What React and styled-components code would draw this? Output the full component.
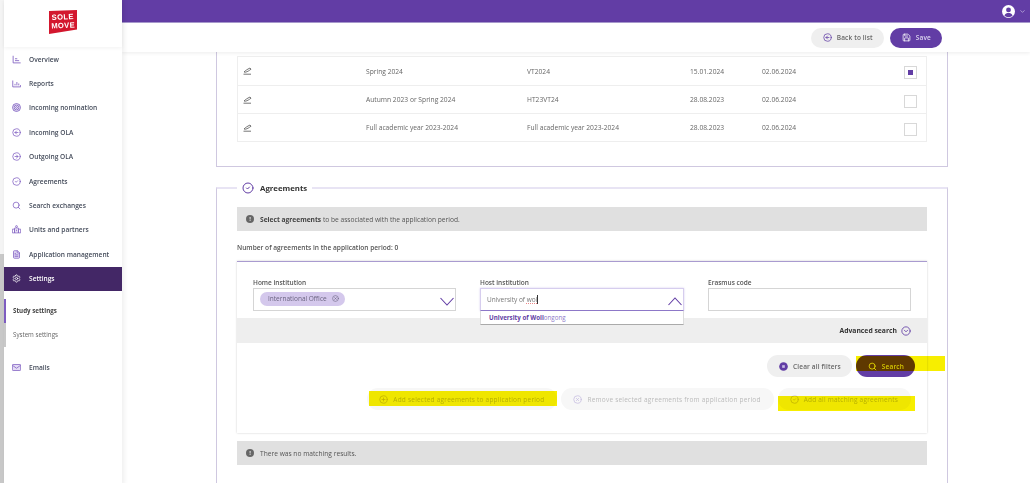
import React from "react";
import styled, { createGlobalStyle } from "styled-components";
import {
  CircleArrowLeft,
  CircleArrowRight,
  CircleCheck,
  CircleChevronDown,
  CirclePlus,
  CircleX,
  ChevronDown,
  FileText,
  Search,
  Settings,
  Save,
} from "lucide-react";

const purple = "#623da5";
const lilac = "#cfc8e0";

const GlobalStyle = createGlobalStyle`
  html, body { margin: 0; padding: 0; height: 100%; background: #fff; overflow: hidden; }
  body { font-family: "Open Sans", "Liberation Sans", sans-serif; color: #555; }
  #root { height: 100%; }
`;

const Page = styled.div`
  display: grid;
  grid-template-columns: 4px 118px 1fr;
  height: 483px;
  overflow: hidden;
`;

const Strip = styled.div`
  background: linear-gradient(#f4f4f4 0, #f4f4f4 254px, #c8c8c8 254px);
`;

const Sidebar = styled.aside`
  display: flex;
  flex-direction: column;
  background: #fff;
  box-shadow: 2px 0 5px rgba(0, 0, 0, 0.07);
  z-index: 3;
`;

const LogoBox = styled.div`
  height: 47px;
  display: flex;
  align-items: flex-start;
  justify-content: center;
  padding-top: 10px;
  box-sizing: border-box;
  box-shadow: 0 1px 4px rgba(0, 0, 0, 0.06);
`;

const Nav = styled.nav`
  display: flex;
  flex-direction: column;
`;

const NavItem = styled.div`
  height: 24.4px;
  display: flex;
  align-items: center;
  gap: 8px;
  padding-left: 8px;
  font-size: 6.6px;
  font-weight: 600;
  color: ${(p) => (p.$active ? "#fff" : "#444b5a")};
  background: ${(p) => (p.$active ? "#432766" : "transparent")};
  svg {
    width: 9px;
    height: 9px;
    flex: none;
    color: ${(p) => (p.$active ? "#fff" : "#7d5cc0")};
  }
`;

const SubNav = styled.div`
  display: flex;
  flex-direction: column;
  margin: 8px 0;
`;

const SubItem = styled.div`
  height: 24px;
  display: flex;
  align-items: center;
  padding-left: 7px;
  font-size: 6.2px;
  font-weight: ${(p) => (p.$active ? 700 : 400)};
  color: ${(p) => (p.$active ? "#444" : "#666")};
  border-left: 2px solid ${(p) => (p.$active ? "#7d5cc0" : "#c8c8c8")};
`;

const Main = styled.main`
  display: flex;
  flex-direction: column;
  min-width: 0;
`;

const TopBar = styled.header`
  height: 22px;
  flex: none;
  background: ${purple};
  border-bottom: 1px solid #a99bd0;
  display: flex;
  align-items: center;
  justify-content: flex-end;
  gap: 4px;
  padding-right: 4px;
  color: #ddd6ef;
`;

const SubBar = styled.div`
  height: 29px;
  flex: none;
  display: flex;
  align-items: center;
  justify-content: flex-end;
  gap: 6px;
  padding-right: 88px;
  background: #fff;
  box-shadow: 0 1px 4px rgba(0, 0, 0, 0.08);
  z-index: 2;
`;

const Pill = styled.button`
  height: ${(p) => (p.$tall ? 22 : 20)}px;
  box-sizing: border-box;
  border: none;
  border-radius: 11px;
  padding: 0 ${(p) => (p.$faded ? 13 : 11)}px 0 12px;
  display: inline-flex;
  align-items: center;
  gap: 5px;
  font: ${(p) => (p.$faded ? 400 : 600)} 6.5px "Open Sans", sans-serif;
  letter-spacing: ${(p) => (p.$faded ? 0.22 : 0.15)}px;
  white-space: nowrap;
  background: ${(p) => (p.$primary ? purple : p.$faded ? "#f7f7f7" : "#efefef")};
  color: ${(p) => (p.$primary ? "#ddd6ef" : p.$faded ? "#bbb" : "#666")};
  svg {
    width: 9px;
    height: 9px;
    flex: none;
    color: ${(p) => (p.$primary ? "#fff" : p.$faded ? "#c6bce0" : purple)};
  }
`;

const Content = styled.div`
  flex: 1;
  min-height: 0;
  padding: 0 82px 0 94px;
  display: flex;
  flex-direction: column;
`;

const Section = styled.section`
  border: 1px solid ${lilac};
  border-top: ${(p) => (p.$open ? "none" : "2px solid #e8e4f4")};
  padding: ${(p) => (p.$open ? "4px 20px 24px" : "0 20px 20px")};
  margin-bottom: ${(p) => (p.$open ? 20 : 0)}px;
  flex: ${(p) => (p.$open ? "none" : 1)};
`;

const Rows = styled.div`
  border: 1px solid #eee;
`;

const Row = styled.div`
  height: 28px;
  box-sizing: border-box;
  display: grid;
  grid-template-columns: 123px 161px 163px 72px 1fr 13px;
  align-items: center;
  padding: 0 9px 0 5px;
  font-size: 6.7px;
  color: #666;
  & + & {
    border-top: 1px solid #eee;
  }
`;

const EditMark = styled.svg`
  width: 9px;
  height: 8px;
  color: #666;
`;

const Check = styled.span`
  width: 13px;
  height: 13px;
  box-sizing: border-box;
  margin-top: 3px;
  border: 1px solid #d8d8d8;
  display: flex;
  align-items: center;
  justify-content: center;
  &::after {
    content: "";
    width: 5px;
    height: 5px;
    background: ${(p) => (p.$on ? purple : "transparent")};
  }
`;

const Legend = styled.div`
  display: flex;
  width: fit-content;
  align-items: center;
  gap: 6px;
  height: 14px;
  margin: -8px 0 12px;
  padding: 0 5px;
  background: #fff;
  font-size: 7.8px;
  font-weight: 700;
  color: #333;
  svg {
    width: 12px;
    height: 12px;
    color: ${purple};
  }
`;

const Notice = styled.div`
  height: 24px;
  display: flex;
  align-items: center;
  gap: 6px;
  padding-left: 9px;
  background: #e0e0e0;
  font-size: 6.65px;
  color: #555;
  b {
    font-weight: 700;
    color: #444;
  }
`;

const Dot = styled.span`
  width: 8px;
  height: 8px;
  border-radius: 50%;
  background: #666;
  color: #e0e0e0;
  font: 700 6px/8px "Open Sans", sans-serif;
  text-align: center;
  flex: none;
`;

const Count = styled.p`
  margin: 12px 0 8px;
  font-size: 6.6px;
  font-weight: 600;
  line-height: 10px;
  color: #555;
`;

const Card = styled.div`
  border-top: 1px solid #a99bd0;
  box-shadow: 0 0 2px rgba(0, 0, 0, 0.2);
  margin-bottom: 8px;
`;

const Filters = styled.div`
  display: grid;
  grid-template-columns: 203px 204px 203px;
  gap: 24px;
  padding: 16px 16px 7px;
`;

const Field = styled.div`
  position: relative;
`;

const Label = styled.div`
  font-size: 6.5px;
  font-weight: 600;
  line-height: 10px;
  color: #555;
`;

const Box = styled.div`
  height: 23px;
  box-sizing: border-box;
  border: 1px solid ${(p) => (p.$open ? "#d6cdee" : "#d5d5d5")};
  border-bottom-color: ${(p) => (p.$open ? "#8d78c8" : "#d5d5d5")};
  box-shadow: ${(p) => (p.$open ? "0 0 2px #d6cdee" : "none")};
  display: flex;
  align-items: center;
  justify-content: space-between;
  padding: 0 1px 0 6px;
  font-size: 6.5px;
  color: #777;
`;

const Arrow = styled.svg`
  width: 14px;
  height: 9px;
  margin-top: 3px;
  flex: none;
  color: ${purple};
`;

const Tag = styled.span`
  height: 14px;
  margin-top: -2px;
  display: inline-flex;
  align-items: center;
  gap: 5px;
  padding: 0 6px 0 8px;
  border-radius: 7px;
  background: #d4c8ec;
  color: #6b6480;
  font-size: 6.5px;
  svg {
    width: 7px;
    height: 7px;
    color: #6b6480;
  }
`;

const Squiggle = styled.span`
  text-decoration: underline dotted #e88 0.6px;
`;

const Caret = styled.span`
  border-left: 1px solid #333;
`;

const Dropdown = styled.div`
  position: absolute;
  left: 0;
  right: 0;
  top: 33px;
  height: 14px;
  box-sizing: border-box;
  background: #fff;
  border: 1px solid #ddd;
  border-top: none;
  border-bottom: 1px solid #aaa;
  padding-left: 8px;
  display: flex;
  align-items: center;
  font-size: 6.2px;
  color: #8d78c8;
  z-index: 1;
  b {
    font-weight: 700;
    color: ${purple};
  }
`;

const Advanced = styled.div`
  height: 25px;
  background: #eee;
  display: flex;
  align-items: center;
  justify-content: flex-end;
  gap: 4px;
  padding-right: 16px;
  font-size: 6.8px;
  font-weight: 700;
  color: #333;
  svg {
    width: 10px;
    height: 10px;
    color: ${purple};
  }
`;

const Actions = styled.div`
  display: flex;
  flex-direction: column;
  gap: 11px;
  padding: 12px 0 23px;
`;

const ActionRow = styled.div`
  display: flex;
  justify-content: flex-end;
  gap: 4px;
  padding-right: ${(p) => p.$inset}px;
`;

const Marked = styled.span`
  position: relative;
  display: inline-flex;
`;

/* yellow marker drawn over the screenshot */
const Highlight = styled.span`
  position: absolute;
  left: ${(p) => p.$left}px;
  right: ${(p) => p.$right}px;
  top: ${(p) => p.$top}px;
  height: 15px;
  background: #f7ee00;
  mix-blend-mode: multiply;
`;

const LogoMark = () => (
  <svg width="28" height="24" viewBox="0 0 28 24">
    <polygon points="0,1 28,0 28,19.5 0,24" fill="#d3172e" />
    <g transform="rotate(-3 14 12)" fontFamily="Liberation Sans" fontWeight="700" fontSize="7.6" letterSpacing="0.35" fill="#fff" textAnchor="middle">
      <text x="14" y="9.5">SOLE</text>
      <text x="14" y="18">MOVE</text>
    </g>
  </svg>
);

const Pen = () => (
  <EditMark viewBox="0 0 9 8" fill="none" stroke="currentColor" strokeWidth="0.9">
    <path d="M1 5 C2.5 3.5 4 2.5 7 1 L8 2.2 C6 3.8 4.5 4.6 2.5 5.2 Z" />
    <path d="M0.5 7.2 H8" />
  </EditMark>
);

const OverviewIcon = () => (
  <svg viewBox="0 0 24 24" fill="none" stroke="currentColor" strokeWidth="2.2">
    <path d="M3 2V21H23M8 10H14M8 15H19" />
  </svg>
);

const ReportsIcon = () => (
  <svg viewBox="0 0 24 24" fill="none" stroke="currentColor" strokeWidth="2.2">
    <path d="M2 4V21H23V16M8 17V13M13 17V8M18 17V12" />
  </svg>
);

const TargetIcon = () => (
  <svg viewBox="0 0 24 24" fill="none" stroke="currentColor" strokeWidth="2.4">
    <circle cx="12" cy="12" r="10.5" />
    <circle cx="12" cy="12" r="6.5" />
    <circle cx="12" cy="12" r="2.5" />
  </svg>
);

const UnitsIcon = () => (
  <svg viewBox="0 0 24 24" fill="none" stroke="currentColor" strokeWidth="2">
    <path d="M1 11H7V21H1ZM17 11H23V21H17ZM7 8H17V21H7Z" />
    <circle cx="12" cy="4" r="2.4" />
    <path d="M12 12V17" />
  </svg>
);

const FileIcon = styled(FileText)`
  fill: #e4dcf5;
`;

const MailIcon = () => (
  <svg viewBox="0 0 24 24" stroke="currentColor" strokeWidth="2">
    <rect x="1" y="4" width="22" height="16" rx="2" fill="#e4dcf5" />
    <path d="M1 6L12 14L23 6" fill="none" />
  </svg>
);

const ClearIcon = () => (
  <svg viewBox="0 0 24 24">
    <circle cx="12" cy="12" r="11.5" fill="currentColor" />
    <rect x="8.5" y="8.5" width="7" height="7" fill="#c8bde6" />
  </svg>
);

const UserIcon = () => (
  <svg width="13" height="13" viewBox="0 0 24 24">
    <circle cx="12" cy="12" r="12" fill="#fff" />
    <circle cx="12" cy="9" r="4.5" fill={purple} />
    <path d="M4.5 19.5C6 15.5 9 14.8 12 14.8s6 .7 7.5 4.7C17.5 21.5 15 22.5 12 22.5s-5.500-1-7.500-3Z" fill={purple} />
  </svg>
);

const TABLE = [
  ["Spring 2024", "VT2024", "15.01.2024", "02.06.2024", true],
  ["Autumn 2023 or Spring 2024", "HT23VT24", "28.08.2023", "02.06.2024", false],
  ["Full academic year 2023-2024", "Full academic year 2023-2024", "28.08.2023", "02.06.2024", false],
];

const NAV = [
  ["Overview", OverviewIcon],
  ["Reports", ReportsIcon],
  ["Incoming nomination", TargetIcon],
  ["Incoming OLA", CircleArrowLeft],
  ["Outgoing OLA", CircleArrowRight],
  ["Agreements", CircleCheck],
  ["Search exchanges", Search],
  ["Units and partners", UnitsIcon],
  ["Application management", FileIcon],
];

export default function App() {
  return (
    <>
      <GlobalStyle />
      <Page>
        <Strip />
        <Sidebar>
          <LogoBox>
            <LogoMark />
          </LogoBox>
          <Nav>
            {NAV.map(([label, Icon]) => (
              <NavItem key={label}>
                <Icon />
                {label}
              </NavItem>
            ))}
            <NavItem $active>
              <Settings />
              Settings
            </NavItem>
          </Nav>
          <SubNav>
            <SubItem $active>Study settings</SubItem>
            <SubItem>System settings</SubItem>
          </SubNav>
          <NavItem>
            <MailIcon />
            Emails
          </NavItem>
        </Sidebar>
        <Main>
          <TopBar>
            <UserIcon />
            <ChevronDown size={7} />
          </TopBar>
          <SubBar>
            <Pill>
              <CircleArrowLeft />
              Back to list
            </Pill>
            <Pill $primary>
              <Save />
              Save
            </Pill>
          </SubBar>
          <Content>
            <Section $open>
              <Rows>
                {TABLE.map((r) => (
                  <Row key={r[0]}>
                    <Pen />
                    <span>{r[0]}</span>
                    <span>{r[1]}</span>
                    <span>{r[2]}</span>
                    <span>{r[3]}</span>
                    <Check $on={r[4]} />
                  </Row>
                ))}
              </Rows>
            </Section>
            <Section>
              <Legend>
                <CircleCheck />
                Agreements
              </Legend>
              <Notice>
                <Dot>!</Dot>
                <span><b>Select agreements</b> to be associated with the application period.</span>
              </Notice>
              <Count>Number of agreements in the application period: 0</Count>
              <Card>
                <Filters>
                  <Field>
                    <Label>Home institution</Label>
                    <Box>
                      <Tag>
                        International Office
                        <CircleX />
                      </Tag>
                      <Arrow viewBox="0 0 14 9" fill="none" stroke="currentColor" strokeWidth="1.1">
                        <path d="M0.5 1L7 8L13.500 1" />
                      </Arrow>
                    </Box>
                  </Field>
                  <Field>
                    <Label>Host institution</Label>
                    <Box $open>
                      <span>University of <Squiggle>wol</Squiggle><Caret /></span>
                      <Arrow viewBox="0 0 14 9" fill="none" stroke="currentColor" strokeWidth="1.1">
                        <path d="M0.5 8L7 1L13.500 8" />
                      </Arrow>
                    </Box>
                    <Dropdown>
                      <b>University of Woll</b>ongong
                    </Dropdown>
                  </Field>
                  <Field>
                    <Label>Erasmus code</Label>
                    <Box />
                  </Field>
                </Filters>
                <Advanced>
                  Advanced search
                  <CircleChevronDown />
                </Advanced>
                <Actions>
                  <ActionRow $inset={12}>
                    <Pill $tall>
                      <ClearIcon />
                      Clear all filters
                    </Pill>
                    <Marked>
                      <Pill $tall $primary>
                        <Search />
                        Search
                      </Pill>
                      <Highlight $left={0} $right={-30} $top={1} />
                    </Marked>
                  </ActionRow>
                  <ActionRow $inset={16}>
                    <Marked>
                      <Pill $tall $faded>
                        <CirclePlus />
                        Add selected agreements to application period
                      </Pill>
                      <Highlight $left={2} $right={0} $top={3} />
                    </Marked>
                    <Pill $tall $faded>
                      <CircleX />
                      Remove selected agreements from application period
                    </Pill>
                    <Marked>
                      <Pill $tall $faded>
                        <CircleCheck />
                        Add all matching agreements
                      </Pill>
                      <Highlight $left={0} $right={-4} $top={7.500} />
                    </Marked>
                  </ActionRow>
                </Actions>
              </Card>
              <Notice>
                <Dot>!</Dot>
                There was no matching results.
              </Notice>
            </Section>
          </Content>
        </Main>
      </Page>
    </>
  );
}
